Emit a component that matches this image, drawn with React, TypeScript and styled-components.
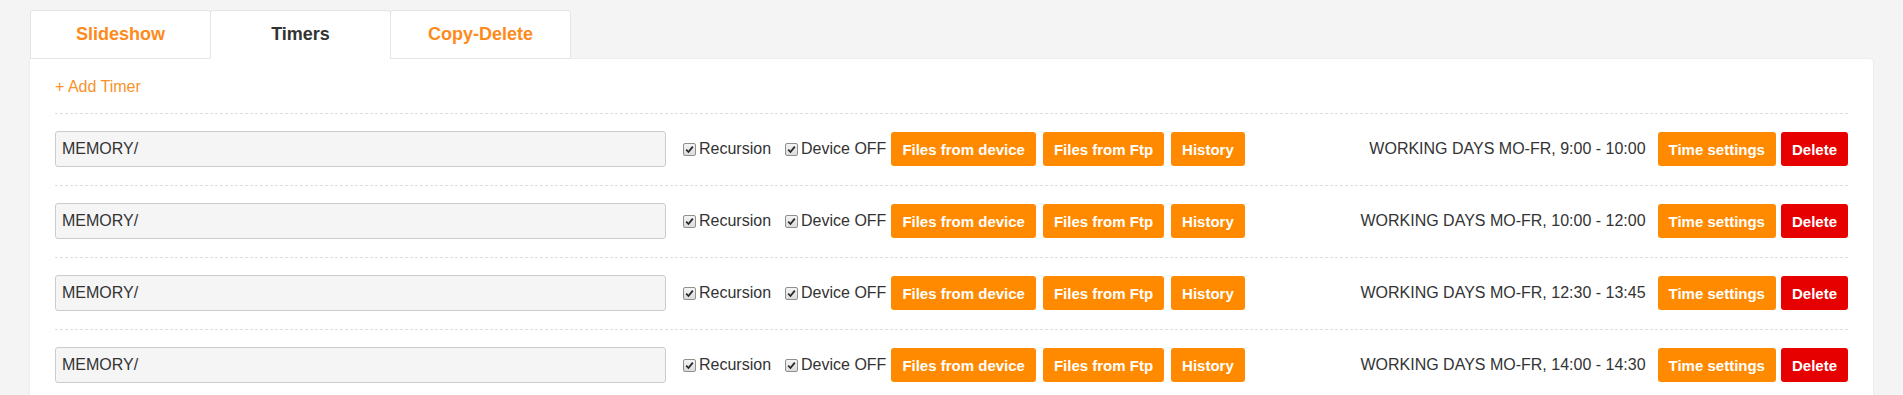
import React from "react";
import styled, { createGlobalStyle } from "styled-components";

const GlobalStyle = createGlobalStyle`
  html, body {
    margin: 0;
    padding: 0;
    background: #f4f4f4;
    font-family: "Liberation Sans", Arial, sans-serif;
    overflow: hidden;
  }
  * { box-sizing: border-box; }
`;

const Page = styled.div`
  padding: 10px 30px 0 30px;
`;

const TabBar = styled.div`
  display: flex;
`;

const Tab = styled.div<{ $active?: boolean }>`
  width: 181px;
  height: 49px;
  margin-right: -1px;
  display: flex;
  align-items: center;
  justify-content: center;
  background: #ffffff;
  border: 1px solid #e4e4e4;
  border-bottom: ${(p) => (p.$active ? "1px solid #ffffff" : "1px solid #e4e4e4")};
  border-radius: 3px 3px 0 0;
  font-size: 18px;
  font-weight: bold;
  color: ${(p) => (p.$active ? "#333333" : "#ff8a1c")};
  position: relative;
  z-index: ${(p) => (p.$active ? 2 : 1)};
  cursor: pointer;
`;

const Panel = styled.div`
  background: #ffffff;
  border-radius: 0 4px 0 0;
  box-shadow: 0 0 2px rgba(0, 0, 0, 0.09);
  padding: 18px 25px 20px 25px;
`;

const AddLink = styled.a`
  display: block;
  font-size: 16px;
  line-height: 20px;
  color: #f8922a;
  text-decoration: none;
  margin-bottom: 16px;
  cursor: pointer;
`;

const TimerRow = styled.div`
  display: flex;
  align-items: center;
  border-top: 1px dashed #dddddd;
  padding: 17px 0 18px 0;
`;

const PathInput = styled.input`
  width: 611px;
  height: 36px;
  background: #f5f5f5;
  border: 1px solid #cccccc;
  border-radius: 3px;
  padding: 0 6px;
  font-family: "Liberation Sans", Arial, sans-serif;
  font-size: 16px;
  color: #333333;
  outline: none;
`;

const CheckLabel = styled.label<{ $first?: boolean }>`
  display: inline-flex;
  align-items: center;
  margin-left: ${(p) => (p.$first ? "17px" : "14px")};
  font-size: 16px;
  color: #333333;
  cursor: pointer;
`;

const CheckBox = styled.span`
  width: 13px;
  height: 13px;
  margin-right: 3px;
  border: 1px solid #8f8f8f;
  border-radius: 2px;
  background: linear-gradient(#f4f4f4, #dcdcdc);
  display: inline-flex;
  align-items: center;
  justify-content: center;
`;

const ButtonGroup = styled.div<{ $gap: number; $ml: number }>`
  display: flex;
  gap: ${(p) => p.$gap}px;
  margin-left: ${(p) => p.$ml}px;
`;

const ActionButton = styled.button<{ $danger?: boolean }>`
  height: 34px;
  padding: 0 11px;
  border: none;
  border-radius: 3px;
  background: ${(p) => (p.$danger ? "#e60000" : "#ff8a00")};
  color: #ffffff;
  font-family: "Liberation Sans", Arial, sans-serif;
  font-size: 15px;
  font-weight: bold;
  cursor: pointer;
`;

const Schedule = styled.span`
  margin-left: auto;
  margin-right: 12px;
  font-size: 16px;
  color: #333333;
`;

const Check = () => (
  <CheckBox>
    <svg width="9" height="9" viewBox="0 0 9 9">
      <path d="M1.2 4.6 L3.5 7 L7.8 1.6" fill="none" stroke="#2a2a2a" strokeWidth="1.8" />
    </svg>
  </CheckBox>
);

const timers = [
  "WORKING DAYS MO-FR, 9:00 - 10:00",
  "WORKING DAYS MO-FR, 10:00 - 12:00",
  "WORKING DAYS MO-FR, 12:30 - 13:45",
  "WORKING DAYS MO-FR, 14:00 - 14:30",
];

export default function App() {
  return (
    <>
      <GlobalStyle />
      <Page>
        <TabBar>
          <Tab>Slideshow</Tab>
          <Tab $active>Timers</Tab>
          <Tab>Copy-Delete</Tab>
        </TabBar>
        <Panel>
          <AddLink>+ Add Timer</AddLink>
          {timers.map((t, i) => (
            <TimerRow key={i}>
              <PathInput defaultValue="MEMORY/" />
              <CheckLabel $first>
                <Check />
                Recursion
              </CheckLabel>
              <CheckLabel>
                <Check />
                Device OFF
              </CheckLabel>
              <ButtonGroup $gap={7} $ml={5}>
                <ActionButton>Files from device</ActionButton>
                <ActionButton>Files from Ftp</ActionButton>
                <ActionButton>History</ActionButton>
              </ButtonGroup>
              <Schedule>{t}</Schedule>
              <ButtonGroup $gap={5} $ml={0}>
                <ActionButton>Time settings</ActionButton>
                <ActionButton $danger>Delete</ActionButton>
              </ButtonGroup>
            </TimerRow>
          ))}
        </Panel>
      </Page>
    </>
  );
}
